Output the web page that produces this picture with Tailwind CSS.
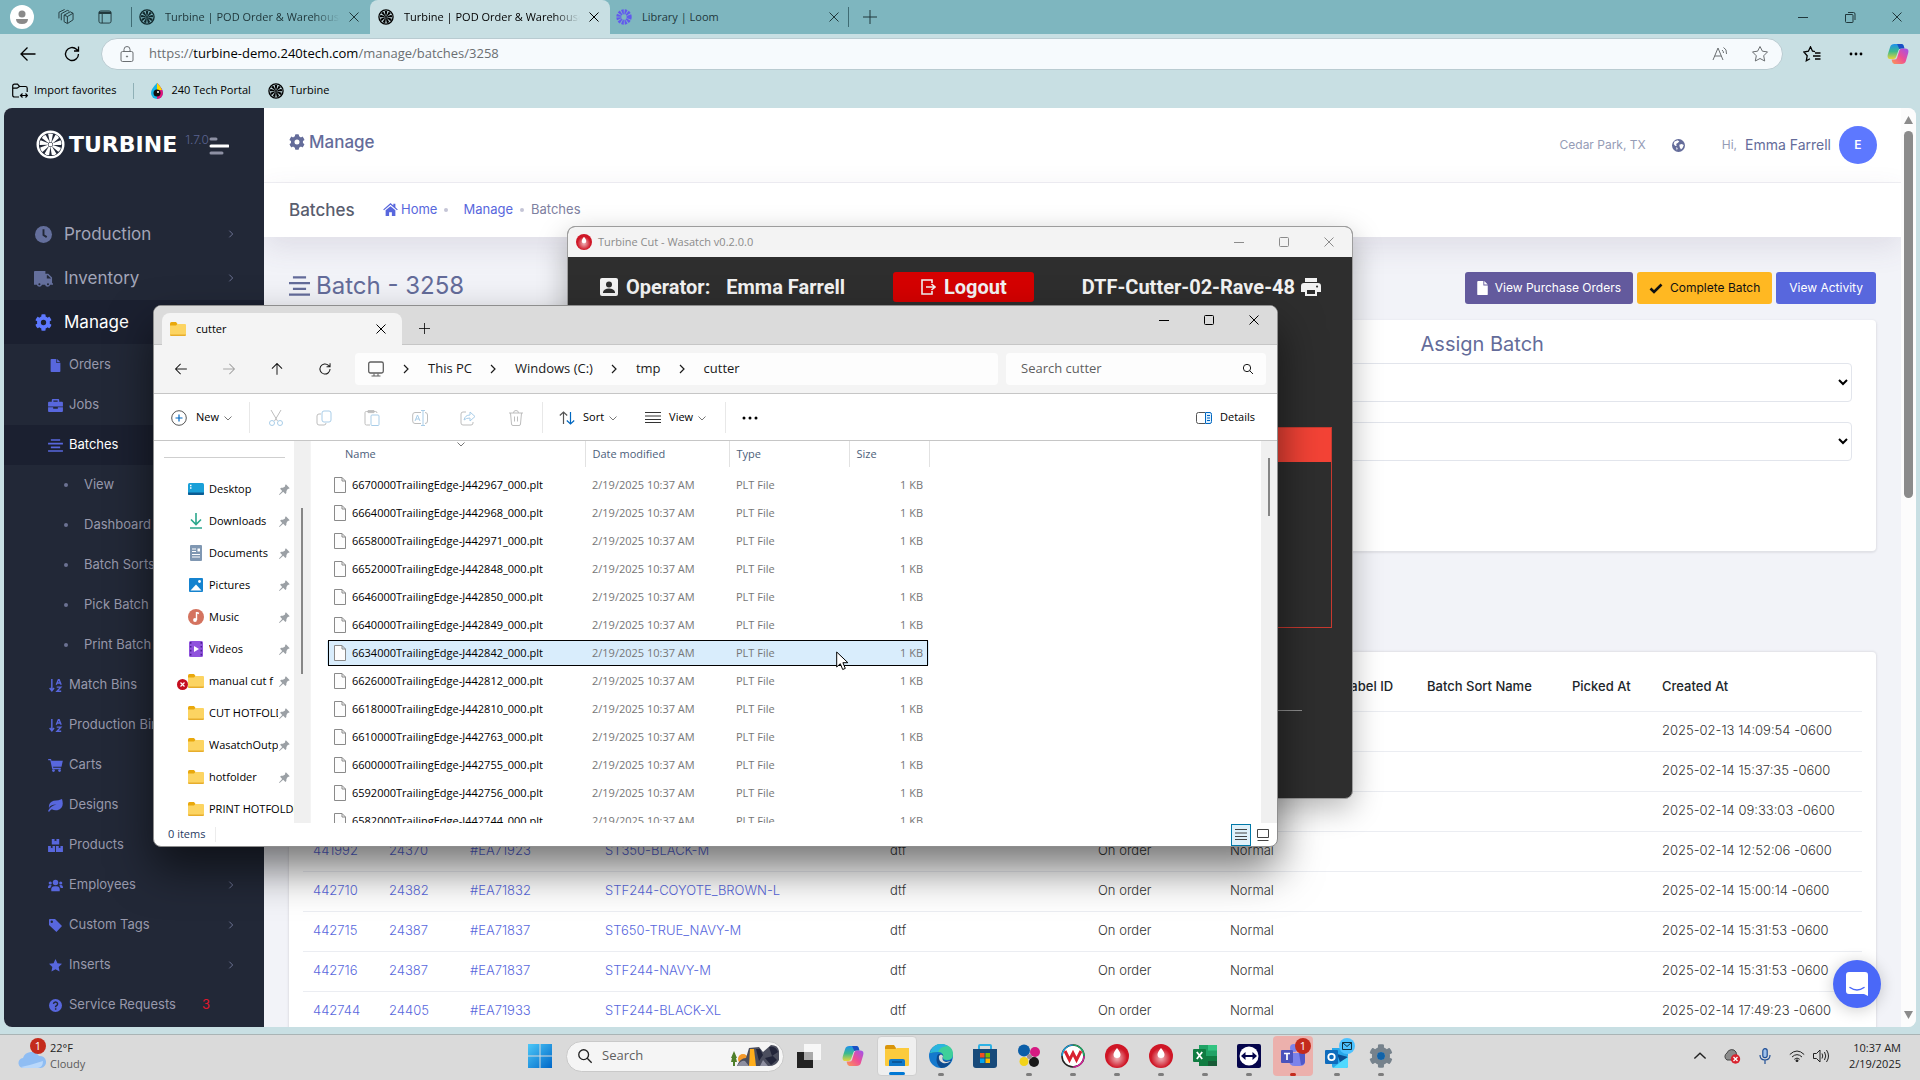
<!DOCTYPE html>
<html lang="en">
<head>
    <meta charset="UTF-8">
    <meta name="viewport" content="width=device-width, initial-scale=1.0">
    <title>Turbine | POD Order &amp; Warehouse</title>
    <script src="https://cdn.jsdelivr.net/npm/@tailwindcss/browser@4"></script>
</head>
<body class="relative flex h-screen flex-col overflow-hidden bg-[#c8dfe3] font-['Open_Sans','Noto_Sans',sans-serif] text-xs text-black">

    <!-- Icon sprite -->
    <svg class="absolute size-0">
        <defs>
            <linearGradient id="cpA" x1="0" y1="0" x2="0" y2="1"><stop offset="0" stop-color="#1e90ef"/><stop offset=".5" stop-color="#3dba8c"/><stop offset="1" stop-color="#e8d53a"/></linearGradient>
            <linearGradient id="cpB" x1="1" y1="0" x2="0" y2="1"><stop offset="0" stop-color="#9b53f0"/><stop offset=".5" stop-color="#ef4f93"/><stop offset="1" stop-color="#fb9a55"/></linearGradient>
            <radialGradient id="rg"><stop offset="0" stop-color="#fff" stop-opacity=".7"/><stop offset="1" stop-color="#fff" stop-opacity="0"/></radialGradient>
        </defs>
        <symbol id="i-turbine" viewBox="0 0 24 24">
            <circle cx="12" cy="12" r="10.6" fill="none" stroke="currentColor" stroke-width="2"/>
            <g fill="currentColor">
                <path id="blade" d="M11.4 10 10 3.2q2.4-.9 4 .2L12.800 10z"/>
                <use href="#blade" transform="rotate(40 12 12)"/><use href="#blade" transform="rotate(80 12 12)"/>
                <use href="#blade" transform="rotate(120 12 12)"/><use href="#blade" transform="rotate(160 12 12)"/>
                <use href="#blade" transform="rotate(200 12 12)"/><use href="#blade" transform="rotate(240 12 12)"/>
                <use href="#blade" transform="rotate(280 12 12)"/><use href="#blade" transform="rotate(320 12 12)"/>
                <circle cx="12" cy="12" r="1.600"/>
            </g>
        </symbol>
        <symbol id="i-x" viewBox="0 0 12 12"><path d="M1.500 1.500l9 9M10.500 1.500l-9 9" stroke="currentColor" fill="none"/></symbol>
        <symbol id="i-plus" viewBox="0 0 14 14"><path d="M7 0v14M0 7h14" stroke="currentColor" fill="none"/></symbol>
        <symbol id="i-min" viewBox="0 0 12 12"><path d="M1 6.500h10" stroke="currentColor" fill="none"/></symbol>
        <symbol id="i-max" viewBox="0 0 12 12"><rect x="1.500" y="1.500" width="9" height="9" rx="1" stroke="currentColor" fill="none"/></symbol>
        <symbol id="i-restore" viewBox="0 0 12 12"><path d="M1.500 3.500h6.500q1 0 1 1v6.500q0 .5-.5 .5h-6q-1 0-1-1zM4 1.500h5.500q1.500 0 1.500 1.500v6" stroke="currentColor" fill="none"/></symbol>
        <symbol id="i-back" viewBox="0 0 18 18"><path d="M16.500 9H2M8.500 2.500L2 9l6.500 6.500" stroke="currentColor" stroke-width="1.300" fill="none"/></symbol>
        <symbol id="i-reload" viewBox="0 0 18 18"><path d="M15.500 9a6.500 6.500 0 1 1-2-4.700L15.500 6M15.500 1.500V6H11" stroke="currentColor" stroke-width="1.300" fill="none"/></symbol>
        <symbol id="i-search" viewBox="0 0 18 18"><circle cx="7.500" cy="7.500" r="5.500" stroke="currentColor" fill="none" stroke-width="1.500"/><path d="M11.500 11.500L16.500 16.500" stroke="currentColor" stroke-width="1.500"/></symbol>
        <symbol id="i-chev" viewBox="0 0 12 12"><path d="M4 2l4 4-4 4" stroke="currentColor" stroke-width="1.200" fill="none"/></symbol>
        <symbol id="i-chevd" viewBox="0 0 10 10"><path d="M1.500 3.500L5 7l3.500-3.500" stroke="currentColor" fill="none"/></symbol>
        <symbol id="i-folder" viewBox="0 0 16 14">
            <path d="M0 1.500Q0 0 1.500 0H6l1.500 2V5H0z" fill="#e9a80c"/>
            <path d="M0 3.500h6L7.500 2H15q1 0 1 1v9.500q0 1.500-1.500 1.500h-13Q0 14 0 12.500z" fill="#fcd462"/><path d="M0 12.500h16q0 1.500-1.500 1.500h-13Q0 14 0 12.500z" fill="#e7ad2c"/>
        </symbol>
        <symbol id="i-pin" viewBox="0 0 12 12"><path d="M7.500 .3l4.200 4.200-1.200.8-1 .1-1.400 2.300-.1 2-1 1.100-2.400-2.300L.6 12l-.6-.5 3.500-3.900L1.200 5.200l1.100-1 2-.1L6.600 2.600l.1-1.300z" fill="#9ba0a5"/></symbol>
        <symbol id="i-file" viewBox="0 0 12 16"><path d="M.5 .5h7.500l3.500 3.500v11.500H.5zM8 .5V4h3.500" fill="#fdfdfd" stroke="#8a8a8a"/></symbol>
        <symbol id="i-copilot" viewBox="0 0 24 24">
            <path d="M8 1h8q2 0 2.500 3l.5 2h-4q-2 0-2.500 2L10 15q-.6 2.500-3 2.500H4Q-.5 17.500 1 12L3.500 4Q4.500 1 8 1z" fill="url(#cpA)"/>
            <path d="M11 1h5q2 0 2.500 3l.5 2h-4l-1.500.6z" fill="#1a4fc4"/>
            <path d="M16 23H8q-2 0-2.500-3L5 18h3q2.500 0 3-2l2.500-8q.7-2 3-2H20q4.500 0 3 5.500L20.500 20q-1 3-4.500 3z" fill="url(#cpB)"/>
        </symbol>
        <symbol id="i-gear" viewBox="0 0 512 512"><path fill="currentColor" d="M487 316l-43-25c5-23 5-47 0-71l43-24c5-3 7-9 6-14-11-36-30-68-55-95-4-4-10-5-15-2l-43 25c-18-16-39-28-61-36V25c0-6-4-11-9-12-36-8-74-8-109 0-6 1-10 6-10 12v49c-22 8-43 20-61 36L87 85c-5-3-11-2-15 2-25 27-44 59-55 95-2 5 0 11 5 14l43 24c-4 24-4 48 0 71l-43 25c-5 3-7 9-5 14 11 36 30 68 55 95 4 4 10 5 15 2l43-25c18 16 39 28 61 36v49c0 6 4 11 10 12 35 8 73 8 109 0 5-1 9-6 9-12v-49c22-8 43-20 61-36l43 25c5 3 11 2 15-2 25-27 44-59 55-95 1-5-1-11-6-14zM256 336a80 80 0 1 1 0-160 80 80 0 0 1 0 160z"/></symbol>
        <symbol id="i-clock" viewBox="0 0 16 16"><circle cx="8" cy="8" r="8" fill="currentColor"/><path d="M8 3v5.500l3 2" stroke="#222837" stroke-width="1.800" fill="none"/></symbol>
        <symbol id="i-truck" viewBox="0 0 20 16"><path fill="currentColor" d="M1 0h11v3h3l4 4v6h1v1.500h-3a2.800 2.800 0 0 1-5.400 0H8.400a2.800 2.800 0 0 1-5.400 0H0V1q0-1 1-1zm12.500 4.500V8H18l-3.500-3.500z"/><circle cx="5.700" cy="14" r="1.100" fill="#222837"/><circle cx="14.700" cy="14" r="1.100" fill="#222837"/></symbol>
        <symbol id="i-doc" viewBox="0 0 12 16"><path fill="currentColor" d="M1 0h6v5h5v10q0 1-1 1H1q-1 0-1-1V1q0-1 1-1zM8 0l4 4H8z"/></symbol>
        <symbol id="i-case" viewBox="0 0 16 14"><path fill="currentColor" fill-rule="evenodd" d="M5 0h6q1 0 1 1v2h3q1 0 1 1v4H0V4q0-1 1-1h3V1q0-1 1-1zm.7 1.600V3h4.600V1.600zM0 9h5.500v1.500h5V9H16v4q0 1-1 1H1q-1 0-1-1z"/></symbol>
        <symbol id="i-center" viewBox="0 0 16 14"><path d="M3 1h10M0 5h16M3 9h10M0 13h16" stroke="currentColor" stroke-width="1.700"/></symbol>
        <symbol id="i-sortaz" viewBox="0 0 16 16"><path d="M3.500 0v14M.8 11l2.700 3.500L6.200 11" stroke="currentColor" stroke-width="1.800" fill="none"/><path d="M9 7l2.500-6h1L15 7M10 5h4M9.500 10h5L9.800 15H15" stroke="currentColor" stroke-width="1.700" fill="none"/></symbol>
        <symbol id="i-cart" viewBox="0 0 18 16"><path fill="currentColor" d="M0 0h3.500l.5 2h14l-1.600 7.500H6l.3 1.300h9.300V12.500H5L2.600 1.500H0z"/><circle cx="6.500" cy="14.300" r="1.700" fill="currentColor"/><circle cx="14" cy="14.300" r="1.700" fill="currentColor"/></symbol>
        <symbol id="i-leaf" viewBox="0 0 16 14"><path fill="currentColor" d="M15 0q3 10-5 12-3 .8-6-1-2 1-3 3L0 13q2-5 9-7-7 0-8 4-1-6 5-8 6-.5 9-2z"/></symbol>
        <symbol id="i-boxes" viewBox="0 0 16 14"><path fill="currentColor" d="M4 0h3v2.500l1-.7 1 .7V0h3v6H4zM0 7.500h3V10l.9-.7.9.7V7.500h2.700V14H0zm8.500 0h3V10l.9-.7.9.7V7.500H16V14H8.500z"/></symbol>
        <symbol id="i-users" viewBox="0 0 18 14"><g fill="currentColor"><circle cx="9" cy="3.500" r="3.300"/><path d="M4 14q-1-6 4-6h2q5 0 4 6z"/><circle cx="2.700" cy="4" r="1.900"/><circle cx="15.300" cy="4" r="1.900"/><path d="M0 10q0-3.500 2.500-3.500Q4 6.500 4.500 7.300 3 8.300 2.800 10zM18 10q0-3.500-2.500-3.500-1.500 0-2 .8 1.500 1 1.700 2.700z"/></g></symbol>
        <symbol id="i-tag" viewBox="0 0 14 14"><path fill="currentColor" fill-rule="evenodd" d="M0 1q0-1 1-1h5.500L14 7.500 8 14 0 6.500zm3 3.300a1.300 1.300 0 1 0 0-2.600 1.300 1.300 0 0 0 0 2.600z"/></symbol>
        <symbol id="i-star" viewBox="0 0 16 16"><path fill="currentColor" d="M8 0l2.400 5.200 5.600.7-4.100 3.900 1.100 5.700-5-2.800-5 2.800 1.100-5.700L0 5.900l5.600-.7z"/></symbol>
        <symbol id="i-help" viewBox="0 0 16 16"><circle cx="8" cy="8" r="8" fill="currentColor"/><path d="M5.500 6q.3-2.300 2.600-2.300T10.600 6Q10.600 7.500 8.200 9v1M8.200 11.300v1.800" stroke="#222837" stroke-width="1.800" fill="none"/></symbol>
        <symbol id="i-drop" viewBox="0 0 24 24"><circle cx="12" cy="12" r="12" fill="#cf1626"/><circle cx="12" cy="14" r="10" fill="url(#rg)"/><path d="M12 4q3.500 4 3.500 6.500a3.500 3.500 0 0 1-7 0Q8.500 8 12 4z" fill="#fff"/></symbol>
    </svg>

    <!-- Tab strip -->
    <header class="flex h-[34px] shrink-0 items-center bg-[#7eb6bf] text-[#21383c]">
        <div class="flex w-[131px] shrink-0 items-center gap-6 pl-[10px]">
            <button aria-label="Profile"><svg class="size-6" viewBox="0 0 24 24"><circle cx="12" cy="12" r="12" fill="#fff"/><circle cx="12" cy="9" r="3.500" fill="#8a8a8a"/><path d="M6 14h12q0 5-6 5t-6-5z" fill="#8a8a8a"/></svg></button>
            <button aria-label="Workspaces"><svg class="size-4" viewBox="0 0 17 17" fill="none" stroke="currentColor"><path d="M6.500 6.500L13 3l3 1.500v7l-6 4-3.500-2zM6.500 6.500L10 8v7M10 8l6-3.500M3.500 12V5L10 1.500l2 .8M1 10V3.500L7 .5"/></svg></button>
            <button aria-label="Tab actions"><svg class="size-[14px]" viewBox="0 0 15 15" fill="none" stroke="currentColor"><rect x="1" y="1" width="13" height="13" rx="2"/><path d="M1 3h13" stroke-width="2.500"/><path d="M4.500 4v10"/></svg></button>
        </div>
        <div class="flex h-5 w-[239px] items-center border-l border-[#3f6c74] pl-[7px] pr-[10px]">
            <svg class="size-4 shrink-0 text-[#10282c]"><use href="#i-turbine"/></svg>
            <span class="ml-[10px] flex-1 overflow-hidden whitespace-nowrap text-[11px] [mask-image:linear-gradient(to_right,black_85%,transparent)]">Turbine | POD Order &amp; Warehouse</span>
            <button aria-label="Close tab" class="ml-2"><svg class="size-3"><use href="#i-x"/></svg></button>
        </div>
        <div class="flex h-full w-[240px] items-center rounded-t-lg bg-[#c8dfe3] pl-2 pr-[10px] text-black">
            <svg class="size-4 shrink-0"><use href="#i-turbine"/></svg>
            <span class="ml-[10px] flex-1 overflow-hidden whitespace-nowrap text-[11px] [mask-image:linear-gradient(to_right,black_85%,transparent)]">Turbine | POD Order &amp; Warehouse</span>
            <button aria-label="Close tab" class="ml-2"><svg class="size-3"><use href="#i-x"/></svg></button>
        </div>
        <div class="flex h-5 w-[239px] items-center border-r border-[#3f6c74] pl-[6px] pr-2">
            <svg class="size-4 shrink-0" viewBox="0 0 16 16"><circle cx="8" cy="8" r="5.200" fill="none" stroke="#6259ee" stroke-width="5" stroke-dasharray="1.900 .82"/></svg>
            <span class="ml-[10px] flex-1 text-[11px]">Library | Loom</span>
            <button aria-label="Close tab"><svg class="size-3"><use href="#i-x"/></svg></button>
        </div>
        <button aria-label="New tab" class="ml-[14px]"><svg class="size-[14px]"><use href="#i-plus"/></svg></button>
        <div class="ml-auto flex gap-[35px] pr-[17px]">
            <button aria-label="Minimize"><svg class="size-3"><use href="#i-min"/></svg></button>
            <button aria-label="Restore"><svg class="size-3"><use href="#i-restore"/></svg></button>
            <button aria-label="Close"><svg class="size-3"><use href="#i-x"/></svg></button>
        </div>
    </header>

    <!-- Address bar -->
    <div class="flex h-[39px] shrink-0 items-center pl-[19px] pr-[11px]">
        <button aria-label="Back"><svg class="size-[18px]"><use href="#i-back"/></svg></button>
        <button aria-label="Refresh" class="ml-[26px]"><svg class="size-[18px]"><use href="#i-reload"/></svg></button>
        <div class="ml-5 flex h-8 flex-1 items-center rounded-full border border-[#b9cbd1] bg-[#f6fafd] pl-[18px] pr-[14px] text-[#6b6f72]">
            <svg class="h-4 w-[14px]" viewBox="0 0 14 16" fill="none" stroke="currentColor"><rect x="1" y="5.500" width="12" height="10" rx="1.500"/><path d="M4 5.500V3.500a3 3 0 0 1 6 0v2"/><circle cx="7" cy="10.500" r=".6" fill="currentColor"/></svg>
            <p class="ml-[15px] flex-1 text-[13px]">https://<span class="text-black">turbine-demo.240tech.com</span>/manage/batches/3258</p>
            <button aria-label="Read aloud"><svg class="size-4" viewBox="0 0 16 16" fill="none" stroke="currentColor"><path d="M1 14L6 2l5 12M2.700 10h6.600M10 4q1.500 1 1.500 3M11.500 1.500Q15 3 14.500 8"/></svg></button>
            <button aria-label="Add to favorites" class="ml-6"><svg class="size-4 overflow-visible" viewBox="0 0 16 16" fill="none" stroke="currentColor"><path d="M8 .5l2.400 4.700 5.100.7-3.800 3.900 1 5.200L8 12.500 3.300 15l1-5.200L.5 5.900l5.100-.7z"/></svg></button>
        </div>
        <button aria-label="Favorites" class="ml-5"><svg class="h-4 w-[18px]" viewBox="0 0 18 16" fill="none" stroke="currentColor" stroke-width="1.300"><path d="M10 5.200h-.5L7.500 .8 5.400 5.200.8 6l3.400 3.700-.9 5.100 3.700-2M12 7h5.500M10 10h7.500M12 13h5.500M10 5.200l2 .5"/></svg></button>
        <button aria-label="Settings" class="ml-7"><svg class="h-1 w-[14px]" viewBox="0 0 14 4"><circle cx="2" cy="2" r="1.400"/><circle cx="7" cy="2" r="1.400"/><circle cx="12" cy="2" r="1.400"/></svg></button>
        <button aria-label="Copilot" class="ml-6"><svg class="size-[22px]"><use href="#i-copilot"/></svg></button>
    </div>

    <!-- Favorites bar -->
    <nav class="flex h-[35px] shrink-0 items-center pl-3 text-[11px]">
        <a href="#" class="flex items-center gap-[6px] pr-[17px]"><svg class="size-4" viewBox="0 0 16 16" fill="none" stroke="currentColor" stroke-width="1.200"><path d="M7 14H2.500Q.7 14 .7 12.300V3Q.7 1.200 2.500 1.200h3L7.500 3.500h6q1.700 0 1.700 1.700V9M.7 5.200H5L7.500 3.500M9 12.500h6.500M10.500 10.500l-2 2 2 2M13.500 10.500l2 2-2 2"/></svg>Import favorites</a>
        <a href="#" class="flex items-center gap-2 border-l border-[#8fb0b6] pl-[17px]"><svg class="h-4 w-3" viewBox="0 0 12 16"><path d="M6 0q6 6 6 10a6 6 0 0 1-12 0Q0 6 6 0z" fill="#18b3e6"/><path d="M6 0q6 6 6 10a6 6 0 0 1-6 6z" fill="#e4157c"/><path d="M6 0q4 4 5 7H6z" fill="#ffd800"/><circle cx="6" cy="10" r="3.500" fill="#111"/><circle cx="7" cy="9" r="1" fill="#fff"/></svg>240 Tech Portal</a>
        <a href="#" class="ml-[17px] flex items-center gap-[6px]"><svg class="size-4"><use href="#i-turbine"/></svg>Turbine</a>
    </nav>

    <!-- Web page -->
    <div class="mx-1 mb-[7px] flex min-h-0 flex-1 overflow-hidden rounded-lg bg-[#f2f3f8] font-[Inter,sans-serif]">
        <aside class="w-[260px] shrink-0 overflow-hidden bg-[#222837]">
            <div class="flex h-[104px] items-start pl-8 pt-[22px]">
                <svg class="size-[29px] shrink-0 text-white"><use href="#i-turbine"/></svg>
                <span class="ml-1 font-['DejaVu_Sans'] text-[22px]/[29px] font-bold text-white">TURBINE</span>
                <span class="ml-2 text-xs/5 font-light text-[#5a6390]">1.7.0</span>
                <button aria-label="Toggle menu" class="mt-[7px]"><svg class="h-[18px] w-5" viewBox="0 0 20 18" stroke-width="3" stroke-linecap="round"><path d="M2 2h5M2 16h11" stroke="#8d90a3"/><path d="M2 9h17" stroke="#fff"/></svg></button>
            </div>
            <ul id="mainMenu" class="text-[17px] text-[#a2a5b9]"></ul>
            <ul id="subMenu" class="pt-px text-[13px] text-[#9899ac]"></ul>
        </aside>

        <main class="min-w-0 flex-1 overflow-hidden">
            <div class="flex h-[75px] items-start justify-between border-b border-[#f0f0f4] bg-white pl-[25px] pr-6 pt-[18px]">
                <h3 class="flex items-center gap-1 text-[17px]/8 font-medium text-[#646c9a]"><svg class="size-4"><use href="#i-gear"/></svg>Manage</h3>
                <div class="flex items-center text-xs text-[#959cb6]">
                    <span>Cedar Park, TX</span>
                    <svg class="ml-[26px] size-[13px]" viewBox="0 0 16 16"><circle cx="8" cy="8" r="8" fill="#646c9a"/><path d="M3 3l4-1.500L9 3 7 5 5 6l1 2-2 .5L2 6zM9 7l3-1 2.500 1.500L13 11l-2 2-1.500-3zM5 10l2 1-1 3z" fill="#fff"/></svg>
                    <span class="ml-[37px]">Hi,</span>
                    <span class="ml-2 text-sm text-[#646c9a]">Emma Farrell</span>
                    <span class="ml-2 flex size-[38px] items-center justify-center rounded-full bg-[#5d78ff] font-semibold text-white">E</span>
                </div>
            </div>
            <div class="relative flex h-[54px] items-center bg-white pl-[25px] text-[13px] shadow-[0_10px_30px_rgba(82,63,105,0.12)]">
                <h4 class="w-[94px] text-[17px] font-medium text-[#595d6e]">Batches</h4>
                <a href="#" class="flex items-center gap-[3px] text-[#5867dd]"><svg class="h-[13px] w-[15px]" viewBox="0 0 18 16" fill="currentColor"><path d="M9 0l3.500 3V1H15v4.200L18 8l-1 1-8-7-8 7-1-1zM3 9l6-5 6 5v7h-4.300v-4.500H7.300V16H3z"/></svg>Home</a>
                <span class="mx-[7px] size-1 rounded-full bg-[#c4c5d6]"></span>
                <a href="#" class="ml-2 text-[#5867dd]">Manage</a>
                <span class="mx-[7px] size-1 rounded-full bg-[#c4c5d6]"></span>
                <span class="text-[#7e80a0]">Batches</span>
            </div>

            <div class="px-[25px] pt-[35px]">
                <div class="flex h-8 items-center justify-between">
                    <h2 class="flex h-8 items-center gap-[6px] pb-[5px] text-2xl text-[#646c9a]"><svg class="h-5 w-[21px]" viewBox="0 0 16 14" preserveAspectRatio="none"><path d="M3 1h10M0 5h16M3 9h10M0 13h16" stroke="currentColor" stroke-width="1.600"/></svg>Batch - 3258</h2>
                    <div class="flex gap-1 text-xs">
                        <button class="flex h-8 items-center gap-[7px] rounded-[3px] bg-[#635a9d] px-3 text-white"><svg class="h-[14px] w-[11px]"><use href="#i-doc"/></svg>View Purchase Orders</button>
                        <button class="flex h-8 items-center gap-[7px] rounded-[3px] bg-[#ffb822] px-3 text-[#111]"><svg class="h-[11px] w-[14px]" viewBox="0 0 14 11"><path d="M1.500 5.500l3.500 3.500 7.500-7.500" stroke="currentColor" stroke-width="2.600" fill="none"/></svg>Complete Batch</button>
                        <button class="h-8 rounded-[3px] bg-[#5867dd] px-[13px] text-white">View Activity</button>
                    </div>
                </div>

                <section class="mt-4 grid h-[231px] grid-cols-2 content-start rounded bg-white px-6 shadow-[0_1px_2px_1px_rgba(69,65,78,0.1)]">
                    <div></div>
                    <div class="pl-[30px] pt-2">
                        <h3 class="h-[35px] text-center text-xl/8 text-[#646c9a]">Assign Batch</h3>
                        <select aria-label="Assign user" class="h-[39px] w-full rounded border border-[#e2e5ec] bg-white"><option></option></select>
                        <select aria-label="Assign station" class="mt-5 h-[39px] w-full rounded border border-[#e2e5ec] bg-white"><option></option></select>
                    </div>
                </section>

                <section class="mt-[101px] rounded bg-white px-[14px] pt-[11px] shadow-[0_0_2px_1px_rgba(69,65,78,0.1)]">
                    <table class="w-full table-fixed text-left text-[13px] font-light text-[#333]">
                        <colgroup><col class="w-[76px]"><col class="w-[81px]"><col class="w-[135px]"><col class="w-[285px]"><col class="w-[208px]"><col class="w-[132px]"><col class="w-[109px]"><col class="w-[88px]"><col class="w-[145px]"><col class="w-[90px]"><col></colgroup>
                        <thead>
                            <tr class="h-12 border-b border-[#ebedf2] text-[#212529]">
                                <th></th><th></th><th></th><th></th><th></th><th></th><th></th>
                                <th class="whitespace-nowrap pl-[14px] font-medium">Label ID</th><th class="whitespace-nowrap pl-[10px] font-medium">Batch Sort Name</th><th class="whitespace-nowrap pl-[10px] font-medium">Picked At</th><th class="whitespace-nowrap pl-[10px] font-medium">Created At</th>
                            </tr>
                        </thead>
                        <tbody id="batchRows"></tbody>
                    </table>
                </section>
            </div>
        </main>

        <!-- Page scrollbar -->
        <div class="flex w-[15px] shrink-0 flex-col items-center bg-[#fcfcfc] pb-[7px] pt-2">
            <svg class="size-[9px]" viewBox="0 0 9 9"><path d="M4.500 0L9 8H0z" fill="#8b8b8b"/></svg>
            <div class="mt-[6px] h-[367px] w-[9px] rounded-full bg-[#8b8b8b]"></div>
            <svg class="mt-auto size-[9px]" viewBox="0 0 9 9"><path d="M4.500 8L9 0H0z" fill="#8b8b8b"/></svg>
        </div>
    </div>

    <!-- Chat launcher -->
    <button aria-label="Open chat" class="absolute bottom-[72px] right-[39px] flex size-12 items-center justify-center rounded-full bg-[#4a68f8] shadow-[0_2px_16px_rgba(0,0,0,0.2)]">
        <svg class="h-6 w-[22px]" viewBox="0 0 22 24"><path d="M3 0h16q3 0 3 3v21l-4-2H3q-3 0-3-3V3q0-3 3-3z" fill="#fff"/><path d="M4 15.500q7 5 14 0" stroke="#4a68f8" stroke-width="1.500" fill="none" stroke-linecap="round"/></svg>
    </button>

    <!-- Turbine Cut window -->
    <section class="absolute left-[567px] top-[226px] flex h-[573px] w-[786px] flex-col overflow-hidden rounded-lg border border-[#9d9d9d] bg-[#2e2e2e] shadow-[0_10px_30px_rgba(0,0,0,0.28)]">
        <div class="flex h-[30px] shrink-0 items-center bg-[#f3f3f3] pl-2 pr-[17px] text-[11px] text-[#8b8b8b]">
            <svg class="h-4 w-4"><use href="#i-drop"/></svg>
            <h1 class="ml-[6px] flex-1">Turbine Cut - Wasatch v0.2.0.0</h1>
            <div class="flex gap-[33px]">
                <button aria-label="Minimize"><svg class="size-3"><use href="#i-min"/></svg></button>
                <button aria-label="Maximize"><svg class="size-3"><use href="#i-max"/></svg></button>
                <button aria-label="Close"><svg class="size-3"><use href="#i-x"/></svg></button>
            </div>
        </div>
        <div class="flex h-[60px] shrink-0 items-center justify-between pl-8 pr-[31px] font-[Roboto,sans-serif] text-xl font-bold text-[#f2f2f2]">
            <p class="flex items-center"><svg class="mr-2 size-[18px]" viewBox="0 0 18 18"><rect width="18" height="18" rx="2" fill="#f2f2f2"/><circle cx="9" cy="6.500" r="3" fill="#2e2e2e"/><path d="M3 15v-1q1-3.500 6-3.500t6 3.500v1z" fill="#2e2e2e"/></svg>Operator:<span class="ml-4">Emma Farrell</span></p>
            <button class="flex h-[30px] w-[141px] items-center justify-center gap-2 rounded-[3px] bg-[#d50000]"><svg class="size-4" viewBox="0 0 16 16" fill="none" stroke="#f2f2f2" stroke-width="1.600"><path d="M12 4V1H2v14h10v-3M6 8h8M11.500 5L15 8l-3.500 3"/></svg>Logout</button>
            <p class="flex items-center gap-[6px]">DTF-Cutter-02-Rave-48<svg class="h-[18px] w-5" viewBox="0 0 20 18" fill="#f2f2f2"><path d="M4 0h12v4H4zM3 5h14q3 0 3 3v6h-4v4H4v-4H0V8q0-3 3-3zm3 7v4h8v-4zm10-4.500a1 1 0 1 0 .1 0z" fill-rule="evenodd"/></svg></p>
        </div>
        <div class="mx-5 mt-[110px] h-[201px] border border-[#c8392f]">
            <div class="h-[34px] bg-[#f44336]"></div>
        </div>
        <div class="mx-[50px] mt-[82px] border-t border-[#8f8f8f]"></div>
    </section>

    <!-- File Explorer window -->
    <section class="absolute left-[153px] top-[305px] flex h-[542px] w-[1125px] flex-col overflow-hidden rounded-lg border border-[#8e8e8e] bg-white text-[11px] shadow-[0_22px_44px_rgba(0,0,0,0.55)]">
        <div class="flex h-[39px] shrink-0 items-end border-b border-[#c6c6c6] bg-[#dbdbdb] pl-2 pr-[17px]">
            <div class="-mb-px flex h-8 w-[240px] items-center rounded-t-lg bg-[#f4f4f4] pl-2 pr-[15px]">
                <svg class="h-[14px] w-4"><use href="#i-folder"/></svg>
                <span class="ml-[10px] flex-1">cutter</span>
                <button aria-label="Close tab"><svg class="size-3"><use href="#i-x"/></svg></button>
            </div>
            <button aria-label="New tab" class="mb-[10px] ml-[17px]"><svg class="size-[11px]"><use href="#i-plus"/></svg></button>
            <div class="mb-[18px] ml-auto flex gap-[33px]">
                <button aria-label="Minimize"><svg class="size-3"><use href="#i-min"/></svg></button>
                <button aria-label="Maximize"><svg class="size-3"><use href="#i-max"/></svg></button>
                <button aria-label="Close"><svg class="size-3"><use href="#i-x"/></svg></button>
            </div>
        </div>
        <div class="flex h-[49px] shrink-0 items-center border-b border-[#c6c6c6] bg-[#f4f4f4] pr-[11px] text-[13px] text-[#1a1a1a]">
            <div class="flex w-[201px] gap-[34px] pl-5">
                <button aria-label="Back"><svg class="size-[14px]"><use href="#i-back"/></svg></button>
                <button aria-label="Forward" class="text-[#a5a5a5]"><svg class="size-[14px] rotate-180"><use href="#i-back"/></svg></button>
                <button aria-label="Up"><svg class="size-[14px] rotate-90"><use href="#i-back"/></svg></button>
                <button aria-label="Refresh"><svg class="size-[14px]"><use href="#i-reload"/></svg></button>
            </div>
            <div class="flex h-8 flex-1 items-center rounded bg-[#fdfdfd] pl-[13px]">
                <svg class="size-4" viewBox="0 0 16 16" fill="none" stroke="#5f5f5f"><rect x=".7" y="1" width="14.600" height="11" rx="1.800" stroke-width="1.300"/><path d="M6 12.500v2.500M10 12.500v2.500M3.500 15h9"/></svg>
                <svg class="ml-4 size-3"><use href="#i-chev"/></svg><span class="ml-4">This PC</span>
                <svg class="ml-[15px] size-3"><use href="#i-chev"/></svg><span class="ml-4">Windows (C:)</span>
                <svg class="ml-[15px] size-3"><use href="#i-chev"/></svg><span class="ml-4">tmp</span>
                <svg class="ml-[15px] size-3"><use href="#i-chev"/></svg><span class="ml-4">cutter</span>
            </div>
            <div class="ml-2 flex h-8 w-[260px] items-center rounded bg-[#fdfdfd] pl-[15px] pr-3">
                <input type="text" aria-label="Search cutter" placeholder="Search cutter" class="w-[200px] flex-1 bg-transparent outline-none placeholder:text-[#5f5f5f]">
                <svg class="size-3"><use href="#i-search"/></svg>
            </div>
        </div>
        <div class="flex h-[47px] shrink-0 items-center border-b border-[#c6c6c6] pl-[17px] pr-[22px] pt-px">
            <button class="flex w-[78px] items-center"><svg class="size-4" viewBox="0 0 16 16" fill="none"><circle cx="8" cy="8" r="7.300" stroke="#555"/><path d="M8 4.500v7M4.500 8h7" stroke="#0067c0" stroke-width="1.200"/></svg><span class="ml-[9px]">New</span><svg class="ml-1 size-[10px] text-[#777]"><use href="#i-chevd"/></svg></button>
            <div class="flex h-[31px] items-center gap-8 border-x border-[#e8e8e8] px-[18px] text-[#bdbdbd]">
                <button aria-label="Cut"><svg class="size-4" viewBox="0 0 16 16" fill="none" stroke="currentColor"><path d="M3 0l6.500 11M13 0L6.500 11"/><g stroke="#a9cde8"><circle cx="4" cy="13" r="2.500"/><circle cx="12" cy="13" r="2.500"/></g></svg></button>
                <button aria-label="Copy"><svg class="size-4" viewBox="0 0 16 16" fill="none" stroke="currentColor"><path d="M5 4H3Q1 4 1 6v7q0 2 2 2h5q2 0 2-2"/><rect x="6" y="1" width="9" height="11" rx="2" stroke="#a9cde8"/></svg></button>
                <button aria-label="Paste"><svg class="size-4" viewBox="0 0 16 16" fill="none" stroke="currentColor"><path d="M6 15H2.500Q1 15 1 13.500v-11Q1 1.500 2.500 1.500h9Q13 1.500 13 3M4 .6h6v2H4z"/><rect x="7" y="5" width="8" height="10.500" rx="1" stroke="#a9cde8"/></svg></button>
                <button aria-label="Rename"><svg class="size-4" viewBox="0 0 16 16" fill="none" stroke="currentColor"><path d="M9 2.500H3Q.7 2.500 .7 5v6Q.7 13.500 3 13.500h6M13 2.500q2.500 0 2.500 2.500v6q0 2.500-2.500 2.500"/><path d="M11 .5v15M9 .5h4M9 15.500h4M3 11l2.500-6L8 11M4 9h3" stroke="#a9cde8"/></svg></button>
                <button aria-label="Share"><svg class="size-4" viewBox="0 0 16 16" fill="none" stroke="currentColor"><path d="M6 2H3Q1 2 1 4v9q0 2 2 2h8q2 0 2-2v-1"/><path d="M4 10q1-5 6-5V2l5 4.500-5 4.500V8Q6 8 4 10z" stroke="#a9cde8"/></svg></button>
                <button aria-label="Delete"><svg class="size-4" viewBox="0 0 16 16" fill="none" stroke="currentColor"><path d="M1 3h14M5.500 3q0-2.500 2.500-2.500T10.500 3M2.500 3l1 11q0 1.500 1.500 1.500h6q1.500 0 1.500-1.500l1-11M6.500 6.500v5M9.500 6.500v5"/></svg></button>
            </div>
            <div class="flex h-[31px] w-[183px] items-center border-r border-[#e8e8e8] pl-4">
                <button class="flex items-center"><svg class="size-4" viewBox="0 0 16 16" fill="none" stroke="#555" stroke-width="1.200"><path d="M4.500 14V2M.8 5.500L4.500 2l3.700 3.500"/><path d="M11.500 2v12M7.800 10.500l3.700 3.500 3.700-3.500" stroke="#0067c0"/></svg><span class="ml-2">Sort</span><svg class="ml-1 size-[10px] text-[#777]"><use href="#i-chevd"/></svg></button>
                <button class="ml-[27px] flex items-center"><svg class="h-[11px] w-4" viewBox="0 0 16 11" stroke="#333"><path d="M0 .5h16M0 4h16M0 7.500h16M0 10.500h16"/></svg><span class="ml-2">View</span><svg class="ml-1 size-[10px] text-[#777]"><use href="#i-chevd"/></svg></button>
            </div>
            <button aria-label="See more" class="ml-4"><svg class="h-1 w-4" viewBox="0 0 16 4"><circle cx="2" cy="2" r="1.500"/><circle cx="8" cy="2" r="1.500"/><circle cx="14" cy="2" r="1.500"/></svg></button>
            <button class="ml-auto flex items-center gap-2"><svg class="h-3 w-4" viewBox="0 0 16 12" fill="none"><path d="M9 .5H2.500Q.5 .5 .5 2.500v7q0 2 2 2H9" stroke="#555"/><path d="M9.500 .5H14q1.500 0 1.500 2v7q0 2-1.500 2H9.500zM11 3.500h3M11 6h3M11 8.500h3" stroke="#0067c0" fill="#dff0ff"/></svg>Details</button>
        </div>

        <div class="flex min-h-0 flex-1">
            <!-- Quick access -->
            <nav class="w-[140px] shrink-0 overflow-hidden pl-[10px]">
                <div class="mb-[15px] mt-4 w-[121px] border-t border-[#cfcfcf]"></div>
                <ul id="quickAccess"></ul>
            </nav>
            <div class="w-4 shrink-0 bg-[#f0f0f0] pl-[7px] pt-[67px]"><div class="h-[166px] w-[2px] bg-[#868686]"></div></div>
            <div class="relative min-w-0 flex-1 overflow-hidden border-l border-[#f4f4f4] pl-4">
                <svg class="absolute left-[145px] top-[-2px] size-[10px] text-[#777]"><use href="#i-chevd"/></svg>
                <table class="w-[602px] table-fixed text-left">
                    <thead>
                        <tr class="h-[26px] text-[#4c607a]">
                            <th class="w-[258px] border-r border-[#e2e2e2] pl-[18px] font-normal">Name</th>
                            <th class="w-[144px] border-r border-[#e2e2e2] pl-[7px] font-normal">Date modified</th>
                            <th class="w-[120px] border-r border-[#e2e2e2] pl-[7px] font-normal">Type</th>
                            <th class="w-[80px] border-r border-[#e2e2e2] pl-[7px] font-normal">Size</th>
                        </tr>
                        <tr class="h-1"></tr>
                    </thead>
                    <tbody id="fileRows"></tbody>
                </table>
            </div>
            <div class="w-4 shrink-0 bg-[#f0f0f0] pl-[7px] pt-[17px]"><div class="h-[58px] w-[2px] bg-[#868686]"></div></div>
        </div>
        <footer class="flex h-[23px] shrink-0 items-center pl-[14px] pr-2 text-[#1f3a5f]">
            <span class="border-r border-[#ececec] pr-[10px]">0 items</span>
            <button aria-label="Details view" class="ml-auto flex h-[22px] w-5 items-center justify-center border border-[#0078a8] bg-[#dff1fa]"><svg class="h-[11px] w-3" viewBox="0 0 12 11" stroke="#444"><path d="M0 .5h12M0 4h12M0 7.500h12M0 10.500h12"/></svg></button>
            <button aria-label="Large icons view" class="ml-[6px]"><svg class="size-3" viewBox="0 0 12 12" fill="none" stroke="#444"><path d="M.5 .5h11v8H.5zM.5 11.500h11"/></svg></button>
        </footer>
    </section>

    <!-- Mouse cursor -->
    <svg class="absolute left-[836px] top-[651px] h-5 w-[13px]" viewBox="0 0 13 20"><path d="M.7 1v15l3.600-3.300 2.400 5.800 2.600-1.100-2.400-5.700h5z" fill="#fff" stroke="#000"/></svg>

    <!-- Taskbar -->
    <footer class="flex h-[46px] shrink-0 items-center border-t border-[#a9b4b5] bg-[#dadada] pb-[3px] text-[11px] text-[#222]">
        <div class="flex flex-1 items-center pl-[18px]">
            <div class="relative"><svg class="h-[26px] w-7" viewBox="0 0 28 26"><path d="M6 25a5 5 0 0 1-1-10 9 9 0 0 1 16-2 6 6 0 0 1 2 12z" fill="#8fbdf3"/><path d="M6 25a5 5 0 0 1-3-1q10-2 22-6 0 6-5 7z" fill="#b9d8fb"/></svg>
                <span class="absolute right-0 top-[-5px] flex size-4 items-center justify-center rounded-full bg-[#c42b1c] text-white">1</span></div>
            <p class="ml-1 leading-4">22°F<br><span class="text-[#5a5a5a]">Cloudy</span></p>
        </div>
        <div class="flex items-center pl-3">
            <button aria-label="Start" class="mr-[14px]"><svg class="size-6" viewBox="0 0 24 24"><defs><linearGradient id="win" x2="1" y2="1"><stop stop-color="#4cc8f8"/><stop offset="1" stop-color="#0067c8"/></linearGradient></defs><path d="M0 0h11.500v11.500H0zM12.500 0H24v11.500H12.500zM0 12.500h11.500V24H0zM12.500 12.500H24V24H12.500z" fill="url(#win)"/></svg></button>
            <div class="flex h-[31px] w-[218px] items-center overflow-hidden rounded-full border border-[#c9c9c9] bg-[#f5f5f5] pl-[10px]">
                <svg class="size-4"><use href="#i-search"/></svg>
                <input type="text" aria-label="Search" placeholder="Search" class="ml-[9px] w-[120px] bg-transparent text-[13px] outline-none placeholder:text-[#5f5f5f]">
                <svg class="ml-auto h-[22px] w-[52px]" viewBox="0 0 52 22"><circle cx="12" cy="14" r="5" fill="#f59a2a"/><path d="M3 6L0 13h1l-1 4h2v4h2v-4h2l-1-4h1z" fill="#4f7f2b"/><path d="M6 21q3-8 9-8l3-10 10-1 4 5 8-7q7 0 8 6v9q-3 6-10 6z" fill="#4b4e5e"/><path d="M19 4h4l2 17h-7z" fill="#ffae1b"/><path d="M25 4l4 0 3 6-4 6zM38 2q7-1 9 5l-6 4zM34 13l8-2 4 4-6 5z" fill="#22253a"/><path d="M6 21q4-6 8-5l4 5zM29 21l3-6 5 6z" fill="#8e8fa0"/></svg>
            </div>
            <div id="taskApps" class="ml-[3px] flex items-center"></div>
        </div>
        <div class="flex flex-1 items-center justify-end pr-[19px]">
            <svg class="size-[14px] rotate-180" viewBox="0 0 10 10"><path d="M1 3.200L5 7l4-3.800" stroke="#222" fill="none"/></svg>
            <svg class="ml-4 h-4 w-[18px]" viewBox="0 0 18 16"><path d="M4 12a4 4 0 0 1 0-7 5 5 0 0 1 9-1l1 6-3 2z" fill="#8b8b8b" stroke="#444"/><circle cx="12.500" cy="11" r="4.700" fill="#d8232e"/><path d="M10.500 9l4 4M14.500 9l-4 4" stroke="#fff" stroke-width="1.300"/></svg>
            <svg class="ml-[18px] h-4 w-3" viewBox="0 0 12 16" fill="none" stroke="#1f4e95" stroke-width="1.200"><rect x="3.800" y=".7" width="4.400" height="9" rx="2.200" fill="#9dc0ec"/><path d="M1 7q0 5 5 5t5-5M6 12v4"/></svg>
            <svg class="ml-[18px] h-3 w-4" viewBox="0 0 16 12" fill="none" stroke="#222"><path d="M.8 4.500q7.200-7 14.400 0M3 7q5-4.700 10 0M5.300 9.300q2.700-2.500 5.400 0"/><circle cx="8" cy="10.800" r="1" fill="#222"/></svg>
            <svg class="ml-2 h-[14px] w-[17px]" viewBox="0 0 17 14" fill="none" stroke="#222"><path d="M.5 4.500h3L7 1v12L3.500 9.500h-3zM9 4.500q1.500 2.500 0 5M11.500 3q2.500 4 0 8M13.500 1q4 6 0 12"/></svg>
            <p class="w-[71px] text-right leading-4">10:37 AM<br>2/19/2025</p>
        </div>
    </footer>

    <script>
        // --- Sidebar ---
        const chevron = '<svg class="ml-auto size-[10px] text-[#6c7293]"><use href="#i-chev"/></svg>';
        const mainMenu = [
            ['i-clock', 'Production', true],
            ['i-truck', 'Inventory', true],
            ['i-gear', 'Manage', false],
        ];
        document.getElementById('mainMenu').innerHTML = mainMenu.map(([icon, label, arrow]) => `
            <li class="${arrow ? '' : 'bg-[#1b2030] text-white'}"><a href="#" class="flex h-11 items-center pl-[30px] pr-7">
                <svg class="h-[17px] w-[19px] ${arrow ? 'text-[#646f9c]' : 'text-[#5d78ff]'}"><use href="#${icon}"/></svg>
                <span class="ml-[11px]">${label}</span>${arrow ? chevron : ''}
            </a></li>`).join('');

        const subMenu = [
            ['i-doc', 'Orders'], ['i-case', 'Jobs'], ['i-center', 'Batches', 'active'],
            ['', 'View'], ['', 'Dashboard'], ['', 'Batch Sorts'], ['', 'Pick Batch'], ['', 'Print Batch'],
            ['i-sortaz', 'Match Bins'], ['i-sortaz', 'Production Bins'], ['i-cart', 'Carts'], ['i-leaf', 'Designs'],
            ['i-boxes', 'Products'], ['i-users', 'Employees', 'arrow'], ['i-tag', 'Custom Tags', 'arrow'],
            ['i-star', 'Inserts', 'arrow'], ['i-help', 'Service Requests', 'count'],
        ];
        document.getElementById('subMenu').innerHTML = subMenu.map(([icon, label, kind]) => icon ? `
            <li class="${kind === 'active' ? 'bg-[#1b2030] text-white' : ''}"><a href="#" class="flex h-10 items-center pl-11 pr-7">
                <svg class="h-[13px] w-[15px] text-[#5867dd]"><use href="#${icon}"/></svg>
                <span class="ml-[6px]">${label}</span>
                ${kind === 'arrow' ? chevron : ''}${kind === 'count' ? '<span class="ml-[26px] text-[#e0182d]">3</span>' : ''}
            </a></li>` : `
            <li><a href="#" class="flex h-10 items-center pl-[60px]">
                <span class="mr-4 size-1 rounded-full bg-[#6c7293]"></span>${label}
            </a></li>`).join('');

        // --- Batch table ---
        const batches = [
            ['', '', '', '', '', '', '', '2025-02-13 14:09:54 -0600'],
            ['', '', '', '', '', '', '', '2025-02-14 15:37:35 -0600'],
            ['', '', '', '', '', '', '', '2025-02-14 09:33:03 -0600'],
            ['441992', '24370', '#EA71923', 'ST350-BLACK-M', 'dtf', 'On order', 'Normal', '2025-02-14 12:52:06 -0600'],
            ['442710', '24382', '#EA71832', 'STF244-COYOTE_BROWN-L', 'dtf', 'On order', 'Normal', '2025-02-14 15:00:14 -0600'],
            ['442715', '24387', '#EA71837', 'ST650-TRUE_NAVY-M', 'dtf', 'On order', 'Normal', '2025-02-14 15:31:53 -0600'],
            ['442716', '24387', '#EA71837', 'STF244-NAVY-M', 'dtf', 'On order', 'Normal', '2025-02-14 15:31:53 -0600'],
            ['442744', '24405', '#EA71933', 'STF244-BLACK-XL', 'dtf', 'On order', 'Normal', '2025-02-14 17:49:23 -0600'],
        ];
        document.getElementById('batchRows').innerHTML = batches.map(row => `
            <tr class="h-10 whitespace-nowrap border-b border-[#ebedf2]">
                ${row.slice(0, 4).map(v => `<td class="pl-[10px]"><a href="#" class="text-[#5867dd]">${v}</a></td>`).join('')}
                ${row.slice(4, 7).map(v => `<td class="pl-[10px]">${v}</td>`).join('')}
                <td></td><td></td><td></td><td class="pl-[10px]">${row[7]}</td>
            </tr>`).join('');

        // --- Explorer quick access ---
        const folder = '<svg class="h-[14px] w-4"><use href="#i-folder"/></svg>';
        const quick = [
            ['Desktop', '<svg class="h-3 w-4" viewBox="0 0 16 12"><rect width="16" height="12" rx="1.500" fill="#1aa0d8"/><path d="M0 9.500h16V11q0 1-1 1H1q-1 0-1-1z" fill="#0b5c94"/><path d="M2 2.500h1.500M2 5h1.500" stroke="#fff" stroke-width="1.500"/></svg>'],
            ['Downloads', '<svg class="size-4" viewBox="0 0 16 16" fill="none" stroke="#2ba78c" stroke-width="1.600"><path d="M8 0v11M3 6.500l5 5 5-5M2 15h12"/></svg>'],
            ['Documents', '<svg class="size-4" viewBox="0 0 16 16"><rect x="2" width="12" height="16" rx="1" fill="#7f97b2"/><path d="M4 4h4M4 6.500h4M4 9.500h8M4 12h8" stroke="#fff" stroke-width="1.200"/><path d="M9.500 3.500h2.500v3H9.500z" fill="#fff"/></svg>'],
            ['Pictures', '<svg class="size-4" viewBox="0 0 16 16"><rect x="1" y="1" width="14" height="14" rx="1" fill="#1583cf"/><path d="M2.500 13.500L8 7.500l5.500 6z" fill="#fff"/><circle cx="11.500" cy="4.500" r="1.400" fill="#fff"/></svg>'],
            ['Music', '<svg class="size-4" viewBox="0 0 16 16"><circle cx="8" cy="8" r="8" fill="#d4735f"/><path d="M8.500 3v8M8.500 3.500l2.500 1" stroke="#fff" stroke-width="1.400"/><circle cx="7" cy="11" r="1.900" fill="#fff"/></svg>'],
            ['Videos', '<svg class="size-4" viewBox="0 0 16 16"><rect x="1" width="14" height="16" rx="1.500" fill="#9053dd"/><path d="M6 5l5 3-5 3z" fill="#fff"/><path d="M2.700 1v14M13.300 1v14" stroke="#4b1f93" stroke-width="1.500" stroke-dasharray="1.700 2.200"/></svg>'],
            ['manual cut f', folder, 'error'],
            ['CUT HOTFOLDER', folder],
            ['WasatchOutput', folder],
            ['hotfolder', folder],
            ['PRINT HOTFOLDER', folder, 'unpinned'],
        ];
        document.getElementById('quickAccess').innerHTML = quick.map(([label, icon, kind]) => `
            <li class="relative flex h-8 items-center pl-6 ${kind === 'unpinned' ? '' : 'pr-1'}">
                ${kind === 'error' ? '<svg class="absolute left-[13px] top-[14px] size-[11px]" viewBox="0 0 11 11"><circle cx="5.500" cy="5.500" r="5.500" fill="#c50f1f"/><path d="M3.500 3.500l4 4M7.500 3.500l-4 4" stroke="#fff" stroke-width="1.200"/></svg>' : ''}
                <span class="w-[21px] shrink-0">${icon}</span>
                <span class="flex-1 overflow-hidden whitespace-nowrap">${label}</span>
                ${kind === 'unpinned' ? '' : '<svg class="ml-px size-[11px] shrink-0"><use href="#i-pin"/></svg>'}
            </li>`).join('');

        // --- Explorer file list ---
        const files = [
            '6670000TrailingEdge-J442967_000.plt', '6664000TrailingEdge-J442968_000.plt', '6658000TrailingEdge-J442971_000.plt',
            '6652000TrailingEdge-J442848_000.plt', '6646000TrailingEdge-J442850_000.plt', '6640000TrailingEdge-J442849_000.plt',
            '6634000TrailingEdge-J442842_000.plt', '6626000TrailingEdge-J442812_000.plt', '6618000TrailingEdge-J442810_000.plt',
            '6610000TrailingEdge-J442763_000.plt', '6600000TrailingEdge-J442755_000.plt', '6592000TrailingEdge-J442756_000.plt',
            '6582000TrailingEdge-J442744_000.plt',
        ];
        const selected = 'outline outline-black -outline-offset-2 bg-[linear-gradient(transparent_2px,#d9edfc_2px,#d9edfc_26px,transparent_26px)]';
        document.getElementById('fileRows').innerHTML = files.map((name, i) => `
            <tr class="h-7 text-[#767676] ${i === 6 ? selected : ''}">
                <td class="pl-[7px] text-black"><span class="flex items-center gap-[6px]"><svg class="h-4 w-3"><use href="#i-file"/></svg>${name}</span></td>
                <td class="pl-[7px]">2/19/2025 10:37 AM</td><td class="pl-[7px]">PLT File</td><td class="pr-[6px] text-right">1 KB</td>
            </tr>`).join('');

        // --- Taskbar apps ---
        const redDrop = '<svg class="size-6"><use href="#i-drop"/></svg>';
        const apps = [
            ['Task view', '<svg class="size-6" viewBox="0 0 24 24"><path d="M0 8h16v16H0z" fill="#222"/><path d="M7 0h17v16H7z" fill="#f7f7f7"/><path d="M7 8h9v8H7z" fill="#aaa"/></svg>', ''],
            ['Copilot', '<svg class="size-[22px]"><use href="#i-copilot"/></svg>', ''],
            ['File Explorer', '<svg class="size-6" viewBox="0 0 24 24"><path d="M0 3q0-2 2-2h7l2 3v4H0z" fill="#d9950b"/><path d="M0 5h10l2-1h12v17q0 1-1 1H1q-1 0-1-1z" fill="#fccb3d"/><path d="M4 22v-5q0-2 2-2h12q2 0 2 2v5z" fill="#0f78c9"/><path d="M7 18h10" stroke="#0a4f8c" stroke-width="1.500"/></svg>', 'focus'],
            ['Edge', '<svg class="size-6" viewBox="0 0 24 24"><circle cx="12" cy="12" r="12" fill="#1479cd"/><path d="M1 9Q4 0 12 0q12 1 12 10 0 6-6 6-5 0-4-4 0-4-5-4-5 0-8 1z" fill="#3fcf9a"/><path d="M1 9Q4 0 12 0q4 0 7 2-8 0-10 6-5-1-8 1z" fill="#2bb4e0"/><path d="M8 12q1-3 5-2 2 1 1 3-1 4 4 4 3 0 5-2-3 9-11 9-6-4-4-12z" fill="#0c4a8f"/><path d="M14 12q-2 5 3 6l5-1q-4 3-8 2-5-2-4-7 2-3 4 0z" fill="#dadada"/></svg>', 'open'],
            ['Store', '<svg class="size-6" viewBox="0 0 24 24"><path d="M6 6V2q0-1 1-1h10q1 0 1 1v4" stroke="#2fb2e5" stroke-width="2" fill="none"/><path d="M0 5h24v16q0 3-3 3H3q-3 0-3-3z" fill="#174a7a"/><path d="M7 9h4.500v4.500H7z" fill="#f25022"/><path d="M12.500 9H17v4.500h-4.500z" fill="#7fba00"/><path d="M7 14.500h4.500V19H7z" fill="#00a4ef"/><path d="M12.500 14.500H17V19h-4.500z" fill="#ffb900"/></svg>', ''],
            ['CMYK', '<svg class="size-6" viewBox="0 0 24 24"><circle cx="7" cy="6.500" r="6" fill="#0b5ea8"/><circle cx="18" cy="8" r="5" fill="#d61a82"/><circle cx="7" cy="17.500" r="4.500" fill="#f2d31a"/><circle cx="17" cy="18" r="5" fill="#1a1a1a"/><circle cx="12.500" cy="12.500" r="2.500" fill="#9a8c94"/></svg>', 'open'],
            ['Wasatch', '<svg class="size-6" viewBox="0 0 24 24"><circle cx="12" cy="12" r="11" fill="#fff" stroke="#222" stroke-width="1.600"/><path d="M12 1a11 11 0 0 1 11 11" stroke="#1bb36b" stroke-width="1.200" fill="none"/><path d="M23 12a11 11 0 0 1-11 11" stroke="#e01fa0" stroke-width="1.200" fill="none"/><path d="M1 12A11 11 0 0 1 12 1" stroke="#19a4e0" stroke-width="1.200" fill="none"/><path d="M4 7l4.500 9L12 9l3.500 7L20 7" stroke="#d8202f" stroke-width="3" fill="none"/></svg>', 'open'],
            ['Turbine Cut', redDrop, 'open'],
            ['Turbine Print', redDrop, 'open'],
            ['Excel', '<svg class="size-6" viewBox="0 0 24 24"><path d="M6 1h18v21H6z" fill="#21a366"/><path d="M6 12h18v10H6z" fill="#107c41"/><path d="M15 1h9v5.500h-9z" fill="#33c481"/><path d="M15 17h9v5h-9z" fill="#185c37"/><rect y="5" width="13" height="13" rx="1" fill="#107c41"/><path d="M3.800 8l5.400 7M9.200 8l-5.400 7" stroke="#fff" stroke-width="1.800"/></svg>', 'open'],
            ['TeamViewer', '<svg class="size-6" viewBox="0 0 24 24"><rect width="24" height="24" rx="2" fill="#05054b"/><circle cx="12" cy="12" r="9.500" fill="#fff"/><path d="M4 12l4.500-4v3h7V8l4.500 4-4.500 4v-3h-7v3z" fill="#05054b"/></svg>', 'open'],
            ['Teams', '<svg class="size-6" viewBox="0 0 24 24"><circle cx="13" cy="4" r="4" fill="#7b83eb"/><path d="M8 9h16v8q0 5-5 5h-5q-6 0-6-6z" fill="#7b83eb"/><path d="M18 9h6v8q0 4-4 4z" fill="#5059c9"/><rect y="6" width="12" height="13" rx="1" fill="#4b53bc"/><path d="M3 9.500h6M6 9.500V16" stroke="#fff" stroke-width="1.700"/></svg><span class="absolute right-[2px] top-[2px] flex size-4 items-center justify-center rounded-full bg-[#c42b1c] text-white">1</span>', 'alert'],
            ['Outlook', '<svg class="size-6" viewBox="0 0 24 24"><path d="M7 4h16v18q0 2-2 2H9q-2 0-2-2z" fill="#28a8ea"/><path d="M8 24L23 12v10q0 2-2 2z" fill="#50d9ff"/><path d="M12 10l11 3-8 5z" fill="#0a4d91"/><rect y="6" width="13" height="14" rx="1" fill="#0f6cbd"/><circle cx="6.500" cy="13" r="3.200" stroke="#fff" stroke-width="1.800" fill="none"/></svg><svg class="absolute right-[2px] top-[2px] size-4" viewBox="0 0 16 16"><circle cx="8" cy="8" r="8" fill="#4cc2ff"/><path d="M3.500 4.500h9v7h-9zl4.500 4 4.500-4" stroke="#10303f" fill="none"/></svg>', 'open'],
            ['Settings', '<svg class="size-6 text-[#76828c]"><circle cx="12" cy="12" r="7" fill="#fff"/><use href="#i-gear"/><circle cx="12" cy="12" r="4" fill="#1263a8"/></svg>', 'open'],
        ];
        const tiles = {
            '': '',
            open: '',
            focus: 'rounded border border-[#cfcfcf] bg-[#efefef]',
            alert: 'rounded bg-[#ecb0ac]',
        };
        const marks = {
            '': '',
            open: '<span class="absolute bottom-0 h-[3px] w-[6px] rounded-full bg-[#7d7d7d]"></span>',
            focus: '<span class="absolute bottom-0 h-[3px] w-4 rounded-full bg-[#0078d4]"></span>',
            alert: '<span class="absolute bottom-0 h-[3px] w-[6px] rounded-full bg-[#c42b1c]"></span>',
        };
        document.getElementById('taskApps').innerHTML = apps.map(([label, icon, state]) => `
            <button aria-label="${label}" class="relative mx-[2px] flex h-10 w-10 items-center justify-center ${tiles[state]}">${icon}${marks[state]}</button>`).join('');
    </script>
</body>
</html>
